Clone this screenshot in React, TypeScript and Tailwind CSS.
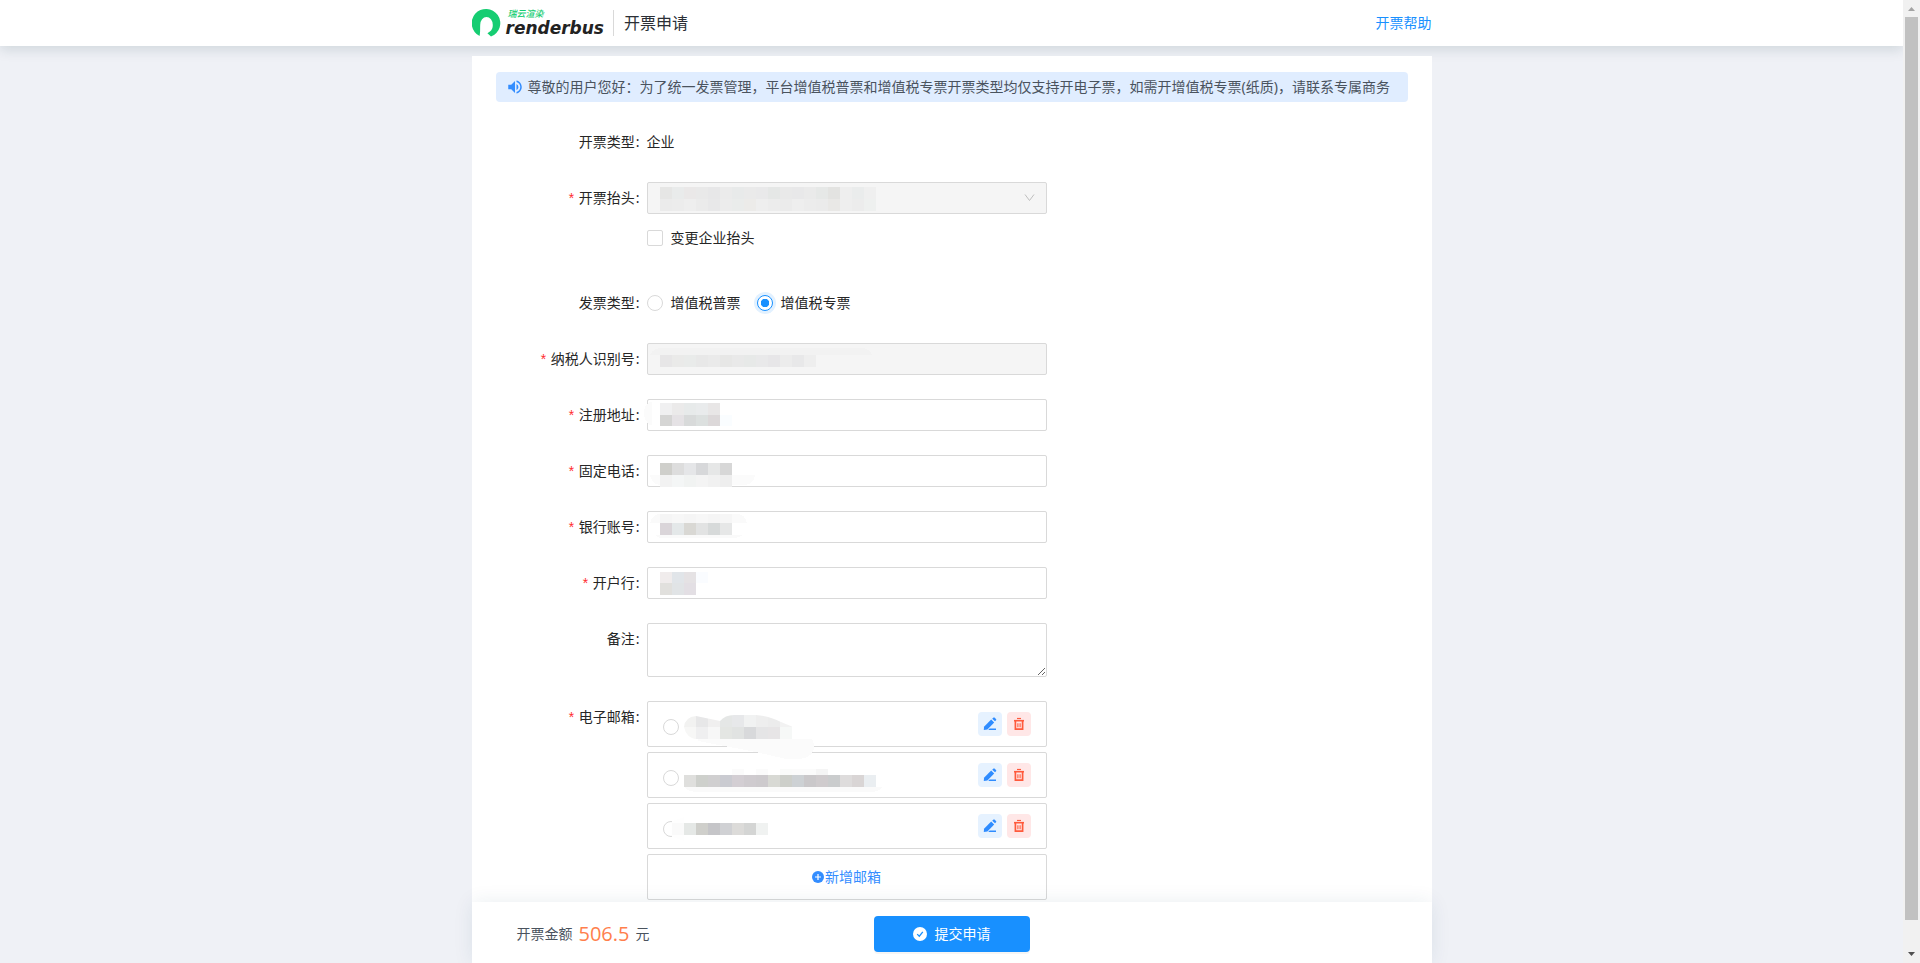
import { useState } from "react";
import type { ReactNode } from "react";
import { MdVolumeUp } from "react-icons/md";

type Strip = { x?: number; y: number; h?: number; colors: string[] };

const CELL = 12;

/** Pixelated cover drawn over a private value. */
function Mosaic({ strips, under }: { strips: Strip[]; under?: ReactNode }) {
  return (
    <svg className="pointer-events-none absolute left-0 top-0 z-10 overflow-visible" width="400" height="32" shapeRendering="crispEdges" aria-hidden="true">
      {under}
      {strips.map((s, i) =>
        s.colors.map((c, j) => (
          <rect key={`${i}-${j}`} x={(s.x ?? 13) + j * CELL} y={s.y} width={CELL} height={s.h ?? CELL} fill={c} />
        )),
      )}
    </svg>
  );
}

function Row({ label, htmlFor, required, children }: { label: string; htmlFor?: string; required?: boolean; children: ReactNode }) {
  const Tag = htmlFor ? "label" : "span";
  return (
    <div className="flex items-start">
      <Tag htmlFor={htmlFor} className="flex h-8 w-[151px] shrink-0 items-center justify-end pr-[7px]">
        {required && <span className="mr-[3px] pt-1 font-['Liberation_Mono'] text-[#ff2d30]">*</span>}
        {label}
        <span className="ml-px">:</span>
      </Tag>
      <div className="w-[400px] min-w-0">{children}</div>
    </div>
  );
}

const field = "block h-8 w-full rounded-xs border border-[#d9d9d9] bg-white px-3 outline-none disabled:bg-[#f5f5f5]";
const radio =
  "size-4 shrink-0 appearance-none rounded-full border border-[#d9d9d9] bg-white checked:border-[#1890ff] checked:bg-[radial-gradient(circle,#1890ff_0_4px,transparent_4.5px)] checked:shadow-[0_0_0_3px_#e2f1ff]";

function TextRow({ id, label, disabled, children }: { id: string; label: string; disabled?: boolean; children: ReactNode }) {
  return (
    <Row label={label} htmlFor={id} required>
      <div className="relative">
        <input id={id} type="text" disabled={disabled} className={field} />
        {children}
      </div>
    </Row>
  );
}

function Logo() {
  return (
    <a href="#" aria-label="renderbus" className="flex items-center gap-[5px]">
      <svg width="29" height="30" viewBox="0 0 29 30" aria-hidden="true">
        <path
          d="M7.6 28 A14.3 14.3 0 1 1 19 28.6 L15.4 25.2 C18.6 23.6 20.8 21.4 20.8 17 A6.3 8 0 0 0 8.2 17 C8 21 8.4 24.5 7.6 28Z"
          fill="#16cd72"
        />
      </svg>
      <span className="flex flex-col">
        <span className="pl-0.5 text-[9px] font-medium italic leading-[10px] text-[#16cd72]">瑞云渲染</span>
        <span className="font-['DejaVu_Sans'] text-[17px] font-bold italic leading-[18px] text-[#222]">renderbus</span>
      </span>
    </a>
  );
}

function EditIcon() {
  return (
    <svg width="14" height="14" viewBox="0 0 14 14" fill="#2f8cff" aria-hidden="true">
      <path d="M.8 13 1 9.8 8.2 2.6 11.2 5.4 4.4 12.4Z" />
      <path d="M9.2 1.8 10.3.7a1 1 0 0 1 1.4 0l1.3 1.2a1 1 0 0 1 0 1.4l-1 1Z" />
      <path d="M6.6 11.4H13V13H5.2Z" />
    </svg>
  );
}

function TrashIcon() {
  return (
    <svg width="12" height="14" viewBox="0 0 12 14" fill="none" stroke="#ff5a3c" aria-hidden="true">
      <path d="M4 1.5H8" strokeWidth="1.2" />
      <path d="M1 3.7H11" strokeWidth="1.6" />
      <path d="M2.4 4V12.2H9.6V4" strokeWidth="1.7" />
      <path d="M4.9 6.2V10.2M7.1 6.2V10.2" strokeWidth="1.1" />
    </svg>
  );
}

function EmailCard({ index, children }: { index: number; children: ReactNode }) {
  return (
    <li className="relative flex h-[46px] items-center gap-[5px] rounded-xs border border-[#d9d9d9] px-[15px]">
      <input type="radio" name="email" aria-label={`电子邮箱 ${index}`} className={`${radio} mt-1.5 mr-auto`} />
      <button type="button" aria-label="编辑" className="flex size-6 items-center justify-center rounded bg-[#e6f2ff]">
        <EditIcon />
      </button>
      <button type="button" aria-label="删除" className="flex size-6 items-center justify-center rounded bg-[#ffe7e7]">
        <TrashIcon />
      </button>
      {children}
    </li>
  );
}

function PageScrollbar() {
  return (
    <div className="sticky top-0 z-30 flex h-screen w-[17px] shrink-0 flex-col items-center bg-[#f1f1f1]" aria-hidden="true">
      <svg width="17" height="17" viewBox="0 0 17 17" fill="#a3a3a3" className="shrink-0">
        <path d="M5 11 8.5 7 12 11Z" />
      </svg>
      <div className="w-[13px] flex-1 bg-[#c1c1c1]" />
      <div className="h-[26px] shrink-0" />
      <svg width="17" height="17" viewBox="0 0 17 17" fill="#505050" className="shrink-0">
        <path d="M5 6 8.5 10 12 6Z" />
      </svg>
    </div>
  );
}

export default function App() {
  const [kind, setKind] = useState("special");

  return (
    <div className="flex min-h-screen bg-[#eff1f6] font-['Noto_Sans','Noto_Sans_CJK_SC',sans-serif] text-sm leading-[22px] text-[#262626]">
      <div className="flex min-w-0 flex-1 flex-col">
        <header className="bg-white shadow-[0_4px_12px_rgba(0,48,56,0.13)]">
          <div className="mx-auto flex h-[46px] max-w-[960px] items-center">
            <Logo />
            <h1 className="ml-[9px] border-l border-[#d9d9d9] pl-2.5 text-base leading-[26px] text-[#2b2f36]">开票申请</h1>
            <a href="#help" className="ml-auto text-[#1890ff]">
              开票帮助
            </a>
          </div>
        </header>

        <main className="relative mx-auto mt-2.5 flex w-full max-w-[960px] flex-1 flex-col bg-white">
          <form className="flex flex-1 flex-col" onSubmit={(e) => e.preventDefault()}>
            <div className="flex flex-1 flex-col gap-6 px-6 pt-4 pb-0.5">
              <p className="flex h-[30px] items-center gap-1 rounded bg-[#e0edff] px-2.5 text-[#4a535e]">
                <MdVolumeUp className="size-[18px] shrink-0 text-[#338dff]" aria-hidden="true" />
                尊敬的用户您好：为了统一发票管理，平台增值税普票和增值税专票开票类型均仅支持开电子票，如需开增值税专票(纸质)，请联系专属商务
              </p>

              <Row label="开票类型">
                <span className="flex h-8 items-center">企业</span>
              </Row>

              <Row label="开票抬头" htmlFor="title" required>
                <div className="relative">
                  <select id="title" disabled className={`${field} appearance-none opacity-100`}>
                    <option value="" />
                  </select>
                  <svg className="absolute right-3 top-2.5" width="11" height="12" viewBox="0 0 11 12" fill="none" stroke="#bfbfbf" aria-hidden="true">
                    <path d="M1 2.5 5.5 8.5 10 2.5" />
                  </svg>
                  <Mosaic
                    strips={[
                      { y: 5, colors: ["#e6e6e5", "#e9ebeb", "#eae8e8", "#e9e9e9", "#e7e7e8", "#ebebeb", "#e8eaea", "#eaeaea", "#e9e9ea", "#e5e7e6", "#e9e9e9", "#e8e8e9", "#eaeaea", "#e6e8e7", "#e3e3e1", "#eeeeee", "#eaecec", "#efefef"] },
                      { y: 17, colors: ["#ebebeb", "#ececec", "#eeeeee", "#ebebeb", "#e8e8e9", "#ececec", "#eaeceb", "#ecebe9", "#eeeeee", "#ececec", "#ebebeb", "#eeeeee", "#ececec", "#ebebeb", "#e9e8e6", "#eeeeee", "#ececec", "#eef0ef"] },
                    ]}
                  />
                </div>
                <label className="mt-2 mb-[9px] flex h-8 items-center gap-2">
                  <input type="checkbox" className="size-4 appearance-none rounded-xs border border-[#d9d9d9] bg-white checked:bg-[#1890ff]" />
                  变更企业抬头
                </label>
              </Row>

              <Row label="发票类型">
                <div className="flex h-8 items-center gap-4" role="radiogroup" aria-label="发票类型">
                  <label className="flex items-center gap-2">
                    <input type="radio" name="kind" checked={kind === "normal"} onChange={() => setKind("normal")} className={radio} />
                    增值税普票
                  </label>
                  <label className="flex items-center gap-2">
                    <input type="radio" name="kind" checked={kind === "special"} onChange={() => setKind("special")} className={radio} />
                    增值税专票
                  </label>
                </div>
              </Row>

              <TextRow id="tax" label="纳税人识别号" disabled>
                <Mosaic
                  under={<path d="M3 12Q6 5 16 5H214Q222 5 225 12Z" fill="#f2f2f2" />}
                  strips={[
                    { y: 12, colors: ["#e7e6e7", "#eaeae9", "#e9ebea", "#e8e8e8", "#eaeaea", "#e7e7e6", "#e9e9e9", "#e7e9e8", "#e9e9ea", "#e7e6e8", "#ececec", "#e8e8e9", "#eeeeee"] },
                  ]}
                />
              </TextRow>

              <TextRow id="address" label="注册地址">
                <Mosaic
                  under={<path d="M3 3Q-3 6-3 14Q-3 22 3 26H5V3Z" fill="#fbfbfb" />}
                  strips={[
                    { y: 4, colors: ["#f0f0f1", "#ebeaea", "#e7eaea", "#e9ebec", "#e8e6e6"] },
                    { y: 16, h: 11, colors: ["#d5d5d4", "#e5e2e5", "#d8dada", "#dce0df", "#dcd8d9", "#fafdff"] },
                  ]}
                />
              </TextRow>

              <TextRow id="phone" label="固定电话">
                <Mosaic
                  under={<path d="M3 20H108Q107 30 96 30H14Q5 30 3 20Z" fill="#fbfbfb" />}
                  strips={[
                    { y: 8, colors: ["#cfcfcb", "#dddddd", "#e5e6e8", "#d7d8da", "#e6e7e7", "#d7d7d7"] },
                    { y: 20, colors: ["#f2f2f2", "#f4f6f6", "#f1f3f2", "#f4f4f4", "#f1f1f1", "#eeeeee"] },
                  ]}
                />
              </TextRow>

              <TextRow id="account" label="银行账号">
                <Mosaic
                  under={<path d="M3 12Q5 3 14 3H90Q98 3 100 12ZM8 24H96Q92 27 84 27H16Q11 27 8 24Z" fill="#fafafa" />}
                  strips={[
                    { y: 3, h: 9, colors: ["#f5f5f5", "#f7f7f7", "#f5f5f5", "#f7f7f7", "#f5f5f5", "#f6f6f6"] },
                    { y: 12, colors: ["#dad5d9", "#e4e8e9", "#d9d8d4", "#e2e3e3", "#d7dada", "#e6e7e7"] },
                  ]}
                />
              </TextRow>

              <TextRow id="bank" label="开户行">
                <Mosaic
                  strips={[
                    { y: 5, h: 11, colors: ["#f0ecec", "#e1e5e9", "#e5e2e4", "#fafcff"] },
                    { y: 16, colors: ["#e1e0dd", "#e1e4e6", "#e3dfe4"] },
                  ]}
                />
              </TextRow>

              <Row label="备注" htmlFor="remark">
                <textarea id="remark" className="block h-[54px] w-full resize rounded-xs border border-[#d9d9d9] px-3 py-1 outline-none" />
              </Row>

              <Row label="电子邮箱" required>
                <ul className="flex flex-col gap-[5px]">
                  <EmailCard index={1}>
                    <Mosaic
                      under={
                        <>
                          <clipPath id="smear">
                            <path d="M36 25Q37 15 48 14L72 19Q77 13 86 13H108Q122 14 133 20L145 25V38H50Q38 36 36 25Z" />
                          </clipPath>
                          <path d="M50 37H163Q166 38 166 45Q165 56 150 57H138L108 50 50 39Z" fill="#fbfbfb" />
                          <g clipPath="url(#smear)">
                            {["#f2f2f1", "#e7e7e8", "#f0efef", "#e5e7e6", "#e7e8ea", "#f1f2f2", "#eeeeee", "#ececec", "#f2f2f2"].map((c, i) => (
                              <rect key={c + i} x={36 + i * CELL} y="12" width={CELL} height="13" fill={c} />
                            ))}
                            {["#f7f7f6", "#efeff0", "#f7f7f7", "#e4e6e3", "#e1e3e2", "#d8d9db", "#e5e5e6", "#e7e5e6", "#f6f8f7"].map((c, i) => (
                              <rect key={c + i} x={36 + i * CELL} y="25" width={CELL} height="12" fill={c} />
                            ))}
                          </g>
                        </>
                      }
                      strips={[]}
                    />
                  </EmailCard>
                  <EmailCard index={2}>
                    <Mosaic
                      under={<path d="M37 34H235Q230 39 222 39H50Q40 39 37 34Z" fill="#fafafa" />}
                      strips={[
                        { x: 84, y: 16, h: 6, colors: ["#fbfbfb", "#ffffff", "#fbfbfb", "#ffffff", "#fafbfa", "#fbfbfb", "#fbfbfb", "#f5f5f5"] },
                        { x: 36, y: 22, colors: ["#dfdfdd", "#ced0cc", "#d0cfd0", "#cacbd1", "#d3ced3", "#cfcbcf", "#cdcacd", "#d8d9d4", "#cdcfca", "#cdd1d4", "#cac8ca", "#cfcbcd", "#cacccd", "#dedcdc", "#d9d5d5", "#eaeef1"] },
                      ]}
                    />
                  </EmailCard>
                  <EmailCard index={3}>
                    <Mosaic
                      under={<path d="M24 17 36 13V37L24 33Z" fill="#fefefe" />}
                      strips={[{ x: 24, y: 19, colors: ["#fafafa", "#e5e8e6", "#cfcfcb", "#c5c5c8", "#d0d1d4", "#dcdbd9", "#d4d5d4", "#f0f2f1"] }]}
                    />
                  </EmailCard>
                  <li>
                    <button type="button" className="flex h-[46px] w-full items-center justify-center gap-px rounded-xs border border-[#d9d9d9] text-[#338dff]">
                      <svg width="12" height="12" viewBox="0 0 12 12" aria-hidden="true">
                        <circle cx="6" cy="6" r="6" fill="#338dff" />
                        <path d="M6 3V9M3 6H9" stroke="#fff" strokeWidth="1.2" />
                      </svg>
                      新增邮箱
                    </button>
                  </li>
                </ul>
              </Row>
            </div>

            <footer className="sticky bottom-0 z-20 grid grid-cols-[1fr_auto_1fr] items-center bg-white px-[45px] pt-3.5 pb-[11px] shadow-[0_0_20px_rgba(0,72,96,0.09)]">
              <p className="flex items-center gap-1.5 text-[#4a535e]">
                开票金额 <strong className="font-['Open_Sans'] text-xl font-normal text-[#ff7f4d]">506.5</strong> 元
              </p>
              <button type="submit" className="flex h-9 w-[156px] items-center justify-center gap-2 rounded bg-[#1890ff] text-white shadow-[0_2px_0_rgba(0,0,0,0.04)]">
                <svg width="14" height="14" viewBox="0 0 14 14" aria-hidden="true">
                  <circle cx="7" cy="7" r="7" fill="#fff" />
                  <path d="M4.2 7.1 6.3 9.2 9.8 4.9" fill="none" stroke="#1890ff" strokeWidth="1.3" />
                </svg>
                提交申请
              </button>
            </footer>
          </form>
        </main>
      </div>
      <PageScrollbar />
    </div>
  );
}
